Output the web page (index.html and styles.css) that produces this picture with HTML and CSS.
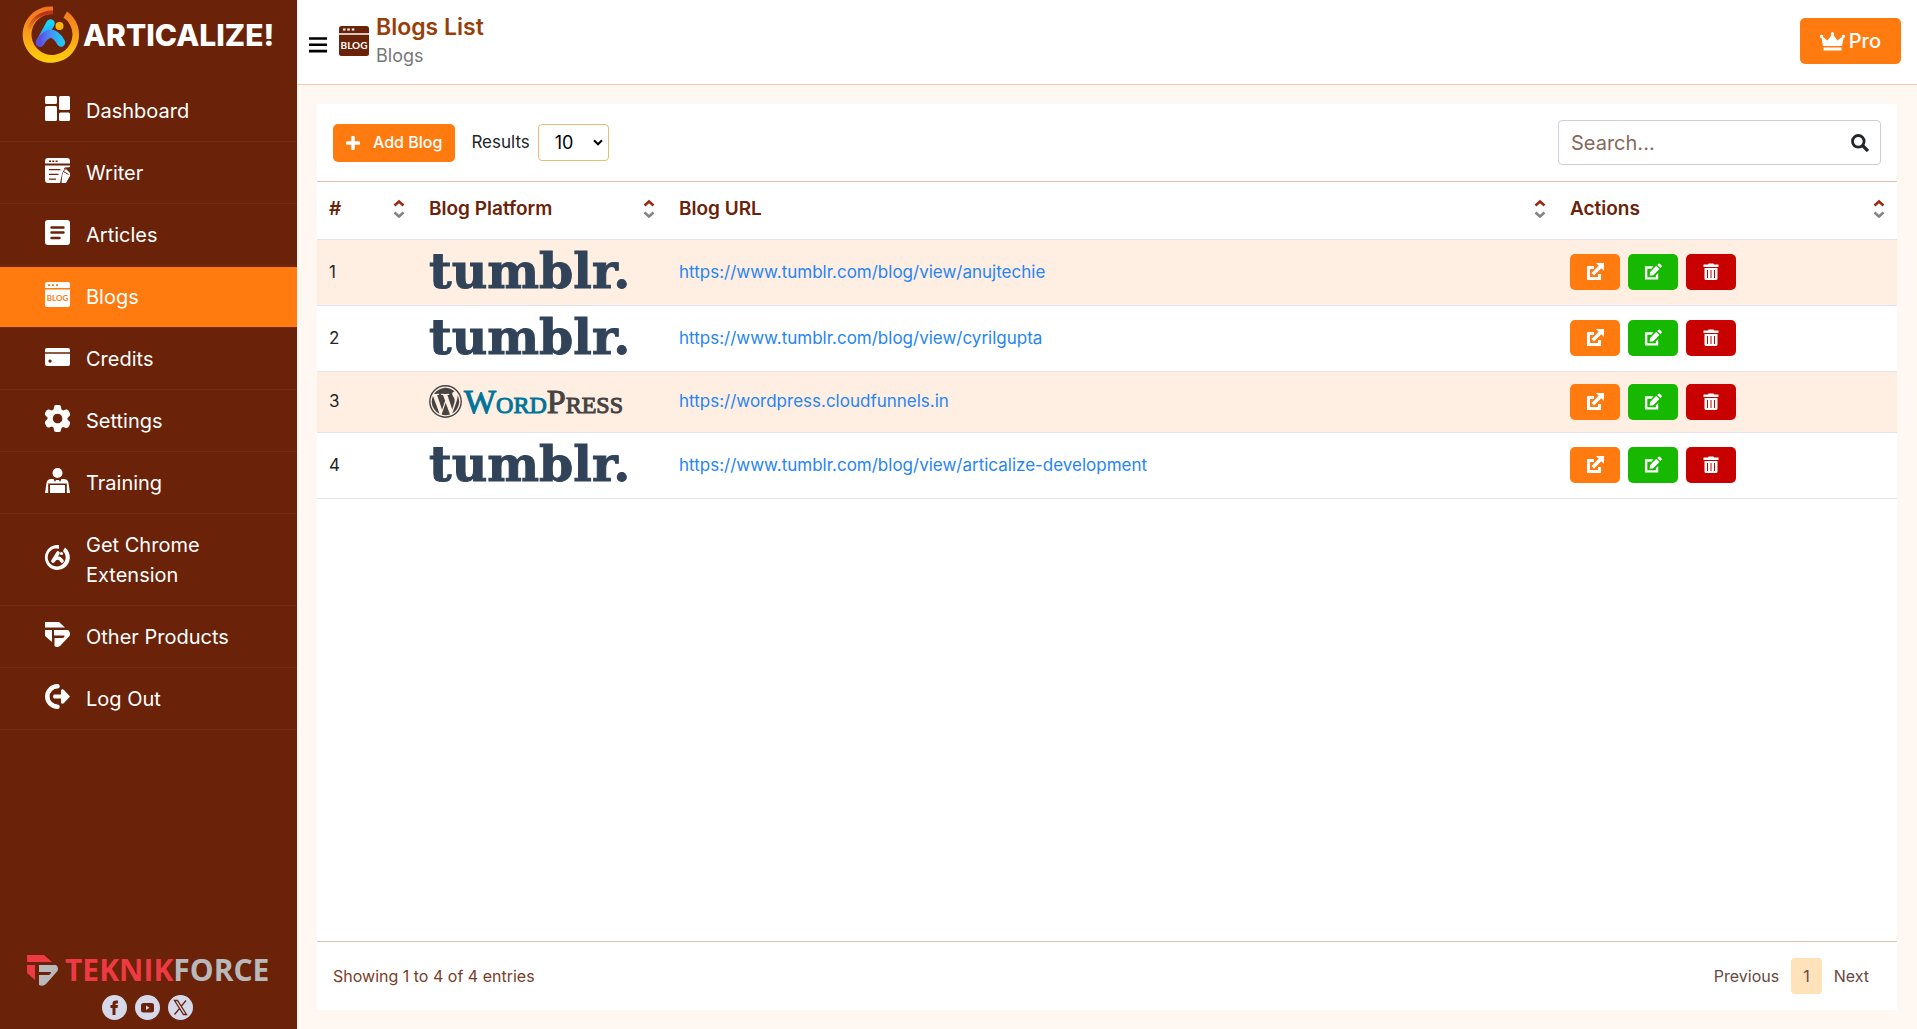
FILE: index.html
```html
<!DOCTYPE html>
<html lang="en">
<head>
<meta charset="utf-8">
<meta name="viewport" content="width=device-width, initial-scale=1">
<title>Blogs List - Articalize!</title>
<link rel="stylesheet" href="styles.css">
</head>
<body>
<svg class="sprite" aria-hidden="true">
  <symbol id="i-open" viewBox="0 0 18 18"><path d="M8 3H1v14h14v-6h-3v3H4V6h4z"/><path d="M10 0h8v8l-2.700-2.700-7.300 7.200-2.500-2.500 7.200-7.300z"/></symbol>
  <symbol id="i-edit" viewBox="0 0 19 18"><path d="M10 3H1v14h14V10l-2.500 2.500V14.500H3.500V5.500H8z"/><path d="M6 13l.5-4L13 2.500 16.300 5.800 9.800 12.500z"/><path d="M14 1.500l1-1q1-.8 2 0l1.300 1.300q1 1 0 2l-1 1z"/></symbol>
  <symbol id="i-trash" viewBox="0 0 16 18"><path fill-rule="evenodd" d="M.5 1.500H5L5.500.5h5l.5 1h4.500V4H.5zM1.500 5h13v10.500q0 1.500-1.500 1.500H3q-1.500 0-1.500-1.500zM4 7v8h1V7zm3.500 0v8h1V7zM11 7v8h1V7z"/></symbol>
  <symbol id="i-sort" viewBox="0 0 12 20"><path d="M1.500 6.500 6 2.500l4.500 4" fill="none" stroke="#9c2a10" stroke-width="2.600"/><path d="M1.500 13.500 6 17.500l4.500-4" fill="none" stroke="#858585" stroke-width="2.600"/></symbol>
</svg>
<div class="app">
  <aside class="sidebar">
    <a class="brand" href="#">
      <svg class="brand-mark" viewBox="0 0 57 57" aria-hidden="true">
        <defs>
          <linearGradient id="ring" x1="0" y1="0" x2="0" y2="1"><stop offset="0" stop-color="#f3701f"/><stop offset=".45" stop-color="#f79a1c"/><stop offset="1" stop-color="#ffd00a"/></linearGradient>
          <linearGradient id="ringDark" x1="1" y1="0" x2="0" y2="1"><stop offset="0" stop-color="#b8331a"/><stop offset=".35" stop-color="#b8331a"/><stop offset="1" stop-color="#f3861f"/></linearGradient>
          <linearGradient id="legs" x1="0" y1="0" x2="1" y2="0"><stop offset="0" stop-color="#5b50dd"/><stop offset=".5" stop-color="#4a8df5"/><stop offset="1" stop-color="#22c4fb"/></linearGradient>
          <linearGradient id="stem" x1="0" y1="1" x2="0" y2="0"><stop offset="0" stop-color="#5b50dd"/><stop offset=".6" stop-color="#22b4fb"/><stop offset="1" stop-color="#14d4ff"/></linearGradient>
        </defs>
        <path d="M31 0.500A28.200 28.200 0 1 0 45 5.500L41.500 11.500A20.500 20.500 0 1 1 31 8z" fill="url(#ring)"/>
        <path d="M31 4.500V8.500A20 20 0 0 0 9 23L5 23A26 26 0 0 1 31 4.500z" fill="url(#ringDark)"/>
        <path d="M18 36.500 28.500 17.500" stroke="url(#stem)" stroke-width="8.500" stroke-linecap="round"/>
        <path d="M18 36.500Q29 19 39 36.500" fill="none" stroke="url(#legs)" stroke-width="8.500" stroke-linecap="round"/>
        <circle cx="37.500" cy="20" r="4" fill="#fbb50e"/>
      </svg>
      <span class="brand-name">ARTICALIZE!</span>
    </a>
    <nav>
      <ul class="menu">
        <li><a href="#"><svg viewBox="0 0 25 25"><rect width="12" height="8" rx="1.500"/><rect y="10" width="12" height="15" rx="1.500"/><rect x="14" width="11" height="14" rx="1.500"/><rect x="14" y="16.500" width="11" height="8.500" rx="1.500"/></svg><span>Dashboard</span></a></li>
        <li><a href="#"><svg viewBox="0 0 25 25"><path fill-rule="evenodd" d="M3 0h19q3 0 3 3v2.500H0V3q0-3 3-3zM4 2.500v1.500h2V2.500zm3.300 0v1.500h2V2.500zm3.300 0v1.500h2V2.500z"/><path fill-rule="evenodd" d="M0 7.500h25v1.500q-6 0-8 7l-2 9H3q-3 0-3-3zM4 11v1.300h11.500V11zm0 4.700V17h9.500v-1.300zm0 4.700v1.300h7v-1.300z"/><path d="M17 20q0-6 4-9l4 4v3l-4 7h-4.500z"/><path d="M18.500 13.500l5 3M19 10.500q2-1.500 4 0l2 2M25 19l-3 6" fill="none" stroke="#6a2209" stroke-width="1"/></svg><span>Writer</span></a></li>
        <li><a href="#"><svg viewBox="0 0 25 25"><rect width="25" height="25" rx="3"/><path d="M6.500 7.500h12M6.500 12.500h12M6.500 18h8" stroke="#6a2209" stroke-width="2.400" stroke-linecap="round"/></svg><span>Articles</span></a></li>
        <li class="active"><a href="#" aria-current="page"><svg viewBox="0 0 25 25"><path fill-rule="evenodd" d="M2 0h21q2 0 2 2v4H0V2q0-2 2-2zM3 2.300V4h2V2.300zm4 0V4h2V2.300zm4 0V4h2V2.300zM0 7.500h25V23q0 2-2 2H2q-2 0-2-2z"/><text class="glyph-label on-orange" x="12.500" y="19.300">BLOG</text></svg><span>Blogs</span></a></li>
        <li><a href="#"><svg viewBox="0 0 25 25"><path fill-rule="evenodd" d="M2 4h21q2 0 2 2v2.300H0V6q0-2 2-2zM0 9.800h25V20q0 2-2 2H2q-2 0-2-2zM5 15.500a1.600 1.600 0 1 0 .1 0z"/></svg><span>Credits</span></a></li>
        <li><a href="#"><svg viewBox="0 0 25 25"><path fill-rule="evenodd" d="M9 1q0-2 2-2h3q2 0 2 2l.5 2.500 1.500 1 3-1q1.500-.3 2.500 1l1.500 3q.5 1.500-.5 2.500l-2 2v1.500l2 2q1 1 .5 2.500l-1.500 3q-1 1.300-2.500 1l-3-1-1.500 1L16 24q0 2-2 2h-3q-2 0-2-2l-.5-2.500-1.500-1-3 1q-1.500.3-2.500-1L0 17.500Q-.5 16 .5 15l2-2v-1.500l-2-2Q-.5 8.500 0 7l1.500-2.500q1-1.300 2.500-1l3 1 1.500-1zM12.500 7.700a4.800 4.800 0 1 0 .1 0z"/></svg><span>Settings</span></a></li>
        <li><a href="#"><svg viewBox="0 0 25 25"><circle cx="12.500" cy="5" r="5"/><path d="M0 25l1.500-10q.5-4 5-4h2l1.500 3 1-2h3l1 2 1.500-3h2q4.500 0 5 4L25 25h-3.200v-9.500H3.200V25z"/><path d="M5 17h15v8H5z"/></svg><span>Training</span></a></li>
        <li><a href="#"><svg viewBox="0 0 25 25"><path d="M14 0a12.500 12.500 0 1 0 6 2.500L18 6a9 9 0 1 1-4-2.300z"/><path d="M8 16 13 8M8 16q5-6 9 0" fill="none" stroke="#fff" stroke-width="3.600" stroke-linecap="round"/><circle cx="16.500" cy="8.500" r="1.600"/></svg><span>Get Chrome Extension</span></a></li>
        <li><a href="#"><svg viewBox="0 0 25 25"><path d="M0 0h14l6 5.500H0zM0 8h7v12L0 14z"/><path d="M9 8h14q3 2.500 1.500 6L15 24q-3 2-5.500 0v-8h8q2 0 2-2v-.500H9z"/></svg><span>Other Products</span></a></li>
        <li><a href="#"><svg viewBox="0 0 25 25"><path d="M12.500 2.300a10.200 10.200 0 0 0 0 20.400" fill="none" stroke="#fff" stroke-width="4.500" stroke-linecap="round"/><path d="M9 10.500h7V6q1.500-1.500 3 0l6 6.500-6 6.500q-1.500 1.500-3 0v-4.500H9q-2-2 0-4z"/></svg><span>Log Out</span></a></li>
      </ul>
    </nav>
    <div class="company">
      <a class="company-logo" href="#">
        <svg viewBox="0 0 31 31" aria-hidden="true"><path fill="#ee3a43" d="M0 0h17l8 7H0zM0 10h8v15l-8-7z"/><path fill="#b9b9bb" d="M12 10h17q3 2 1.500 6L19 29q-3 3-7 1V20h10q2-1 2-3H12z"/></svg>
        <span class="company-name"><span class="company-red">TEKNIK</span>FORCE</span>
      </a>
      <div class="social">
        <a href="#" aria-label="Facebook"><svg viewBox="0 0 25 25"><circle cx="12.500" cy="12.500" r="12.500"/><path class="cut" d="M10.500 20v-7H8.500v-3h2V8.500q0-3 3.500-3h2v3h-1.500q-1 0-1 1v.5H16l-.5 3h-2v7z"/></svg></a>
        <a href="#" aria-label="YouTube"><svg viewBox="0 0 25 25"><circle cx="12.500" cy="12.500" r="12.500"/><rect class="cut" x="6" y="8" width="13" height="9.500" rx="2.500"/><path d="M11 10.500v4.500l3.500-2.200z"/></svg></a>
        <a href="#" aria-label="X"><svg viewBox="0 0 25 25"><circle cx="12.500" cy="12.500" r="12.500"/><path d="M6.500 5.500h3l9 14h-3zM18 5.500l-5 6M11.500 13.500l-5 6" fill="none" stroke="#6a2209" stroke-width="1.300"/></svg></a>
      </div>
    </div>
  </aside>

  <div class="page">
    <header class="topbar">
      <button class="toggle" type="button" aria-label="Toggle menu"><svg viewBox="0 0 18 16"><path d="M0 1.500h18M0 7.800h18M0 14.100h18" stroke="#000" stroke-width="2.600"/></svg></button>
      <svg class="page-icon" viewBox="0 0 30 30" aria-hidden="true"><rect width="30" height="30" rx="2.500" fill="#6a2209"/><path d="M0 8h30" stroke="#d9c6be" stroke-width="2"/><path d="M4 3.500h2.500M8.300 3.500h2.500M12.800 3.500h2.500" stroke="#fff" stroke-width="2"/><text class="glyph-label on-brown" x="15" y="23">BLOG</text></svg>
      <div class="heading">
        <h1>Blogs List</h1>
        <p>Blogs</p>
      </div>
      <button class="pro" type="button"><svg viewBox="0 0 25 19" aria-hidden="true"><path d="M3 14 1.500 6A1.600 1.600 0 1 1 3 5l4.500 3.500L11.500 3A1.600 1.600 0 1 1 13.500 3l4 5.500L22 5a1.600 1.600 0 1 1 1.500 1L22 14zM3.500 15.500h18v3h-18z"/></svg>Pro</button>
    </header>

    <main class="content">
      <section class="card">
        <div class="toolbar">
          <button class="add" type="button"><svg viewBox="0 0 14 14" aria-hidden="true"><path d="M7 1.500v11M1.500 7h11" stroke="#fff" stroke-width="3.600" stroke-linecap="round"/></svg>Add Blog</button>
          <label for="results">Results</label>
          <span class="select">
            <select id="results"><option>10</option><option>25</option><option>50</option></select>
            <svg viewBox="0 0 10 7" aria-hidden="true"><path d="M1 1.300l4 4 4-4" fill="none" stroke="#000" stroke-width="2"/></svg>
          </span>
          <div class="search">
            <input type="search" placeholder="Search..." aria-label="Search blogs">
            <button type="button" aria-label="Search"><svg viewBox="0 0 18 18"><circle cx="7.300" cy="7.300" r="5.800" fill="none" stroke="#212529" stroke-width="2.800"/><path d="M11.500 11.500l5.500 5.500" stroke="#212529" stroke-width="3.200"/></svg></button>
          </div>
        </div>

        <table>
          <colgroup><col class="col-num"><col class="col-platform"><col><col class="col-actions"></colgroup>
          <thead>
            <tr>
              <th scope="col"><span class="th">#<svg><use href="#i-sort"/></svg></span></th>
              <th scope="col"><span class="th">Blog Platform<svg><use href="#i-sort"/></svg></span></th>
              <th scope="col"><span class="th">Blog URL<svg><use href="#i-sort"/></svg></span></th>
              <th scope="col"><span class="th">Actions<svg><use href="#i-sort"/></svg></span></th>
            </tr>
          </thead>
          <tbody>
            <tr>
              <td>1</td>
              <td><span class="tumblr">tumblr.</span></td>
              <td><a href="#">https://www.tumblr.com/blog/view/anujtechie</a></td>
              <td><div class="actions"><button class="open" type="button" aria-label="Open"><svg><use href="#i-open"/></svg></button><button class="edit" type="button" aria-label="Edit"><svg><use href="#i-edit"/></svg></button><button class="delete" type="button" aria-label="Delete"><svg><use href="#i-trash"/></svg></button></div></td>
            </tr>
            <tr>
              <td>2</td>
              <td><span class="tumblr">tumblr.</span></td>
              <td><a href="#">https://www.tumblr.com/blog/view/cyrilgupta</a></td>
              <td><div class="actions"><button class="open" type="button" aria-label="Open"><svg><use href="#i-open"/></svg></button><button class="edit" type="button" aria-label="Edit"><svg><use href="#i-edit"/></svg></button><button class="delete" type="button" aria-label="Delete"><svg><use href="#i-trash"/></svg></button></div></td>
            </tr>
            <tr>
              <td>3</td>
              <td><span class="wordpress"><svg viewBox="0 0 33 33" aria-hidden="true"><circle cx="16.500" cy="16.500" r="15.700" fill="none" stroke="#464342" stroke-width="1.400"/><g fill="#464342"><path d="M2.800 16.500c0 5.400 3.200 10.100 7.700 12.300L4 10.900c-.8 1.700-1.200 3.600-1.200 5.600z"/><path d="M25.700 15.800c0-1.700-.6-2.900-1.100-3.800-.7-1.100-1.400-2.100-1.400-3.200 0-1.300 1-2.400 2.300-2.400h.2A13.700 13.700 0 0 0 5 9h.9c1.400 0 3.700-.2 3.700-.2.700 0 .8 1 .1 1.100 0 0-.8.100-1.600.1l5 14.700 3-8.900L14 10c-.8 0-1.400-.1-1.400-.1-.8 0-.7-1.200 0-1.100 0 0 2.300.2 3.600.2 1.400 0 3.700-.2 3.700-.2.700 0 .8 1 .1 1.100 0 0-.8.100-1.600.1l4.900 14.600 1.400-4.500c.6-1.900 1-3.200 1-4.300z"/><path d="M16.700 17.700l-4.100 11.900c2.700.8 5.700.7 8.400-.2l-.1-.2zM28.500 10c.3 2.200-.2 4.200-.9 6.300l-4.200 12a13.700 13.700 0 0 0 5.100-18.300z"/></g></svg><span class="wordpress-name"><span class="word">Word</span>Press</span></span></td>
              <td><a href="#">https://wordpress.cloudfunnels.in</a></td>
              <td><div class="actions"><button class="open" type="button" aria-label="Open"><svg><use href="#i-open"/></svg></button><button class="edit" type="button" aria-label="Edit"><svg><use href="#i-edit"/></svg></button><button class="delete" type="button" aria-label="Delete"><svg><use href="#i-trash"/></svg></button></div></td>
            </tr>
            <tr>
              <td>4</td>
              <td><span class="tumblr">tumblr.</span></td>
              <td><a href="#">https://www.tumblr.com/blog/view/articalize-development</a></td>
              <td><div class="actions"><button class="open" type="button" aria-label="Open"><svg><use href="#i-open"/></svg></button><button class="edit" type="button" aria-label="Edit"><svg><use href="#i-edit"/></svg></button><button class="delete" type="button" aria-label="Delete"><svg><use href="#i-trash"/></svg></button></div></td>
            </tr>
          </tbody>
        </table>

        <footer class="table-footer">
          <p>Showing 1 to 4 of 4 entries</p>
          <nav class="pager" aria-label="Pages"><a href="#">Previous</a><a class="current" href="#" aria-current="page">1</a><a href="#">Next</a></nav>
        </footer>
      </section>
    </main>
  </div>
</div>
</body>
</html>
```

FILE: styles.css
```css
* { box-sizing: border-box; }
body {
  margin: 0;
  font: 18px/27px Inter, "Liberation Sans", sans-serif;
  color: #212529;
  background: #fff8f2;
}
h1, p, ul { margin: 0; padding: 0; }
a { text-decoration: none; }
button { font: inherit; border: 0; padding: 0; cursor: pointer; }
svg { display: block; fill: currentColor; flex: none; }
.sprite { position: absolute; width: 0; height: 0; }

.app { display: flex; min-height: 100vh; }

/* Sidebar */
.sidebar {
  flex: none;
  display: flex;
  flex-direction: column;
  width: 297px;
  background: #6a2209;
  color: #fff;
}
.brand {
  display: flex;
  align-items: center;
  gap: 4px;
  height: 80px;
  padding: 0 0 11px 22px;
  color: #fff;
}
.brand-mark { width: 57px; height: 57px; }
.brand-name { font-size: 30px; font-weight: 800; line-height: 36px; }
.menu { list-style: none; }
.menu li { padding-top: 1px; border-bottom: 1px solid #772a12; }
.menu a {
  display: flex;
  align-items: center;
  gap: 16px;
  padding: 15px 60px 15px 45px;
  font-size: 20px;
  line-height: 30px;
  color: #fff;
}
.menu svg { width: 25px; height: 30px; padding-bottom: 5px; overflow: visible; }
.menu .active a { background: #ff7a0f; }
.glyph-label { font-family: Lato, sans-serif; font-weight: 700; text-anchor: middle; }
.on-orange { font-size: 8px; fill: #ff7a0f; }
.on-brown { font-size: 10px; fill: #fff; }

.company { margin-top: auto; padding: 0 29px 9px 27px; }
.company-logo { display: flex; align-items: center; gap: 7px; color: #b9b9bb; }
.company-logo svg { width: 31px; height: 31px; }
.company-name { font: 700 30px/38px "Open Sans", sans-serif; }
.company-red { color: #ee3a43; }
.social { display: flex; justify-content: center; gap: 8px; padding-top: 6px; }
.social a { color: #d5d9e9; }
.social svg { width: 25px; height: 25px; }
.cut { fill: #6a2209; }

/* Header */
.page { flex: 1; min-width: 0; display: flex; flex-direction: column; }
.topbar {
  display: flex;
  align-items: center;
  height: 85px;
  padding: 0 16px 2px 12px;
  background: #fff;
  border-bottom: 1px solid #f8ccae;
}
.toggle { padding-top: 7px; margin-right: 12px; background: none; }
.toggle svg { width: 18px; height: 16px; }
.page-icon { width: 30px; height: 30px; margin-right: 7px; }
.heading { padding-bottom: 2px; }
.heading h1 { font-size: 23px; line-height: 30px; font-weight: 600; color: #973f0a; }
.heading p { color: #777; }
.pro {
  display: flex;
  align-items: center;
  gap: 4px;
  height: 46px;
  margin-left: auto;
  padding: 0 20px;
  border-radius: 5px;
  background: #ff7a0f;
  color: #fff;
  font-size: 20px;
  font-weight: 500;
}
.pro svg { width: 25px; height: 19px; }

/* Card */
.content { flex: 1; display: flex; padding: 19px 20px; }
.card { flex: 1; min-width: 0; display: flex; flex-direction: column; background: #fff; }
.toolbar {
  display: flex;
  align-items: center;
  height: 78px;
  padding: 0 16px;
  border-bottom: 1px solid #e2beb1;
}
.add {
  display: flex;
  align-items: center;
  gap: 13px;
  height: 38px;
  margin-right: 16px;
  padding: 0 13px;
  border-radius: 5px;
  background: #ff7a0f;
  color: #fff;
  font-size: 16px;
  font-weight: 500;
}
.add svg { width: 14px; height: 14px; }
.toolbar label { margin-right: 8px; font-size: 17px; }
.select { position: relative; }
.select select {
  display: block;
  width: 71px;
  height: 37px;
  padding: 0 16px;
  appearance: none;
  border: 1px solid #e6bd72;
  border-radius: 4px;
  background: #fff;
  color: #000;
  font: inherit;
}
.select svg { position: absolute; top: 15px; right: 6px; width: 10px; height: 7px; pointer-events: none; }
.search {
  display: flex;
  align-items: center;
  width: 323px;
  height: 45px;
  margin-left: auto;
  padding: 0 11px 0 12px;
  border: 1px solid #cdd0d9;
  border-radius: 4px;
}
.search input { flex: 1; min-width: 0; padding: 0; border: 0; outline: 0; background: none; font: inherit; font-size: 20px; line-height: 30px; }
.search input::placeholder { color: #86685d; opacity: 1; }
.search button { background: none; }
.search button svg { width: 18px; height: 18px; }

/* Table */
table { width: 100%; table-layout: fixed; border-collapse: collapse; }
.col-num { width: 100px; }
.col-platform { width: 250px; }
.col-actions { width: 339px; }
th, td { text-align: left; vertical-align: middle; border-bottom: 1px solid #e1e4ee; }
th { height: 57px; padding: 12px 12px 15px; color: #6a2209; font-size: 19px; font-weight: 600; }
td { padding: 0 12px; font-size: 17px; }
.th { display: flex; align-items: center; justify-content: space-between; }
.th svg { width: 12px; height: 20px; }
tbody tr:nth-child(odd) { background: #ffefe3; }
td > a { color: #2684f5; }
.tumblr {
  display: block;
  height: 65px;
  font: 700 49px/62px "DejaVu Serif", serif;
  color: #314359;
  -webkit-text-stroke: 1px #314359;
}
.wordpress { display: flex; align-items: center; gap: 2px; height: 60px; color: #464342; }
.wordpress svg { width: 33px; height: 33px; }
.wordpress-name { font: 34px/36px "Liberation Serif", serif; font-variant: small-caps; -webkit-text-stroke: 1px currentColor; }
.word { color: #00749a; }
.actions { display: flex; gap: 8px; }
.actions button { display: grid; place-items: center; width: 50px; height: 36px; border-radius: 5px; color: #fff; }
.actions svg { width: 18px; height: 18px; }
.open { background: #ff7a0f; }
.edit { background: #17b900; }
.delete { background: #c80000; }

.table-footer {
  display: flex;
  align-items: center;
  justify-content: space-between;
  margin-top: auto;
  padding: 16px;
  border-top: 1px solid #e2beb1;
  font-size: 16px;
  color: #7a3d28;
}
.pager { display: flex; line-height: 36px; }
.pager a { padding: 0 12px; color: #674940; }
.pager .current { border-radius: 4px; background: #ffe2ba; }
```
